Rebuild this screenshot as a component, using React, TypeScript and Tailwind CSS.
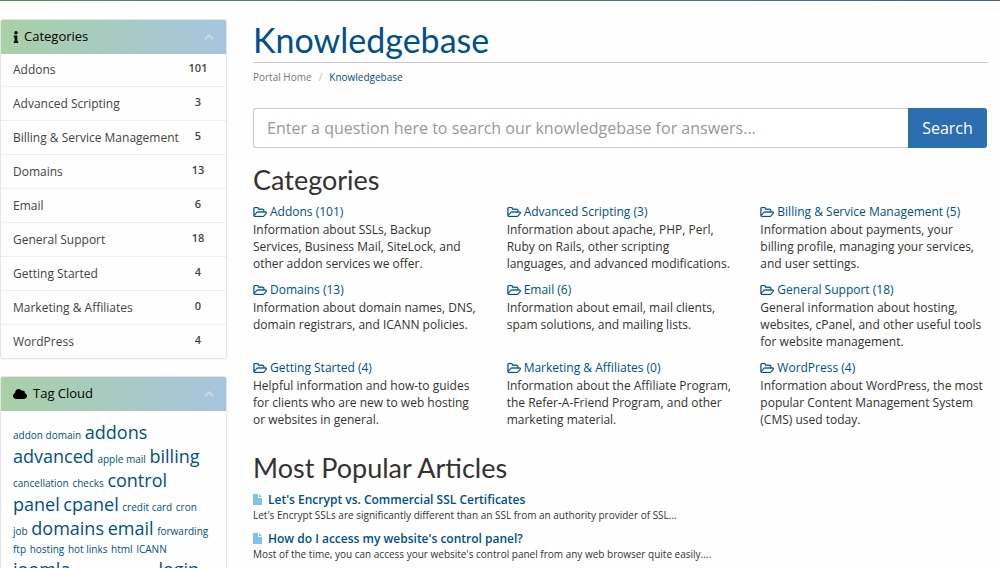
import React, { useState } from 'react';
import { FaChevronUp, FaCloud, FaInfo } from 'react-icons/fa';

interface Category {
  name: string;
  count: number;
  description: string;
}

interface Tag {
  label: string;
  big?: boolean;
}

interface Article {
  title: string;
  excerpt: string;
}

const categories: Category[] = [
  { name: 'Addons', count: 101, description: 'Information about SSLs, Backup Services, Business Mail, SiteLock, and other addon services we offer.' },
  { name: 'Advanced Scripting', count: 3, description: 'Information about apache, PHP, Perl, Ruby on Rails, other scripting languages,\u00a0and advanced modifications.' },
  { name: 'Billing & Service Management', count: 5, description: 'Information about payments, your billing profile, managing your services, and user settings.' },
  { name: 'Domains', count: 13, description: 'Information about domain names, DNS, domain registrars, and ICANN policies.' },
  { name: 'Email', count: 6, description: 'Information about email, mail clients, spam solutions, and mailing lists.' },
  { name: 'General Support', count: 18, description: 'General information about hosting, websites, cPanel, and other useful tools for website management.' },
  { name: 'Getting Started', count: 4, description: 'Helpful information and how-to guides for clients who are new to web hosting or websites in general.' },
  { name: 'Marketing & Affiliates', count: 0, description: 'Information about the Affiliate Program, the Refer-A-Friend Program, and other marketing material.' },
  { name: 'WordPress', count: 4, description: 'Information about WordPress, the most popular Content Management System (CMS) used today.' },
];

const tags: Tag[] = [
  { label: 'addon domain' },
  { label: 'addons', big: true },
  { label: 'advanced', big: true },
  { label: 'apple mail' },
  { label: 'billing', big: true },
  { label: 'cancellation' },
  { label: 'checks' },
  { label: 'control panel', big: true },
  { label: 'cpanel', big: true },
  { label: 'credit card' },
  { label: 'cron job' },
  { label: 'domains', big: true },
  { label: 'email', big: true },
  { label: 'forwarding' },
  { label: 'ftp' },
  { label: 'hosting' },
  { label: 'hot links' },
  { label: 'html' },
  { label: 'ICANN' },
  { label: 'joomla', big: true },
  { label: 'lets encrypt' },
  { label: 'login' },
  { label: 'login', big: true },
];

const articles: Article[] = [
  {
    title: "Let's Encrypt vs. Commercial SSL Certificates",
    excerpt: "Let's Encrypt SSLs are significantly different than an SSL from an authority provider of SSL...",
  },
  {
    title: "How do I access my website's control panel?",
    excerpt: "Most of the time, you can access your website's control panel from any web browser quite easily....",
  },
];

function FolderIcon() {
  return (
    <svg
      viewBox="0 128 1984 1408"
      className="mr-[3px] inline-block h-[10px] w-[14px] align-[-1px]"
      fill="currentColor"
      stroke="currentColor"
      strokeWidth="50"
      aria-hidden="true"
    >
      <path d="M1845 931q0-35-53-35h-1088q-40 0-85.5 21.5t-71.5 52.5l-294 363q-18 24-18 40 0 35 53 35h1088q40 0 86-22t71-53l294-363q18-22 18-39zm-1141-163h768v-160q0-40-28-68t-68-28h-576q-40 0-68-28t-28-68v-64q0-40-28-68t-68-28h-320q-40 0-68 28t-28 68v853l256-315q44-53 116-87.5t140-34.5zm1269 163q0 62-46 120l-295 363q-43 53-116 87.5t-140 34.5h-1088q-92 0-158-66t-66-158v-960q0-92 66-158t158-66h320q92 0 158 66t66 158v32h544q92 0 158 66t66 158v160h192q54 0 99 24.5t67 70.5q15 32 15 68z" />
    </svg>
  );
}

function FileIcon() {
  return (
    <svg viewBox="0 0 9 11" className="mr-[6px] inline-block h-[11px] w-[9px] align-[-1px] text-[#7cc4ea]" fill="currentColor" aria-hidden="true">
      <path d="M0 0h5v4h4v7H0z" />
      <path d="M6 0l3 3H6z" />
    </svg>
  );
}

interface PanelProps {
  title: string;
  icon: React.ReactNode;
  children: React.ReactNode;
}

function Panel({ title, icon, children }: PanelProps) {
  const [open, setOpen] = useState(true);

  return (
    <section className="overflow-hidden rounded-[3px] border border-[#e4e4e4] shadow-xs">
      <h3 className="-m-px">
        <button
          type="button"
          onClick={() => setOpen(!open)}
          aria-expanded={open}
          className="flex h-[35px] w-full items-center bg-linear-to-r from-[#a9d0a6] to-[#a7c4de] px-[13px] text-left text-[13px] text-black"
        >
          {icon}
          <span className="flex-1">{title}</span>
          <FaChevronUp
            stroke="currentColor"
            strokeWidth="40"
            className={open ? 'h-[10px] w-[10px] text-[#d3d8dc]' : 'h-[10px] w-[10px] rotate-180 text-[#d3d8dc]'}
          />
        </button>
      </h3>
      {open && children}
    </section>
  );
}

function App() {
  const [query, setQuery] = useState('');

  return (
    <div className="h-screen overflow-hidden bg-[#fefefe] font-['Open_Sans',sans-serif] text-[#333]">
      <div className="h-px bg-linear-to-r from-[#4f9058] to-[#3a6a94]" />
      <div className="flex gap-[26px] pt-[18px] pr-[12px]">
        <aside className="flex w-[227px] shrink-0 flex-col gap-[17px]">
          <Panel title="Categories" icon={<FaInfo className="mr-[5px] h-3 w-[6px]" />}>
            <ul>
              {categories.map((category) => (
                <li key={category.name} className="border-t border-[#eee] first:border-t-0">
                  <a href="#" className="flex h-[33px] justify-between px-3 text-xs leading-[33px] text-[#444]">
                    <span>{category.name}</span>
                    <span className="w-8 text-center text-[11px] leading-[29px] font-semibold">{category.count}</span>
                  </a>
                </li>
              ))}
            </ul>
          </Panel>

          <Panel title="Tag Cloud" icon={<FaCloud className="mr-[6px] h-[14px] w-[14px]" />}>
            <div className="pt-[10px] pr-4 pl-3 text-sm leading-4 text-[#00508a]">
              {tags.map((tag, index) => (
                <React.Fragment key={index}>
                  <a href="#" className={tag.big ? 'text-lg leading-6' : 'text-[10px] leading-4'}>
                    {tag.label}
                  </a>{' '}
                </React.Fragment>
              ))}
            </div>
          </Panel>
        </aside>

        <main className="min-w-0 flex-1">
          <h1 className="h-11 border-b border-[#ccc] font-['Lato',sans-serif] text-[34px] leading-[42px] text-[#00508a]">
            Knowledgebase
          </h1>
          <nav aria-label="Breadcrumb" className="mt-[6px] text-[10px] leading-4">
            <a href="#" className="text-[#777]">Portal Home</a>
            <span className="mx-[7px] text-[#bbb]">/</span>
            <a href="#" className="text-[#00508a]">Knowledgebase</a>
          </nav>

          <form className="mt-[23px] flex h-10 pr-px" onSubmit={(e) => e.preventDefault()}>
            <input
              type="text"
              aria-label="Search the knowledgebase"
              value={query}
              onChange={(e) => setQuery(e.target.value)}
              placeholder="Enter a question here to search our knowledgebase for answers..."
              className="min-w-0 flex-1 rounded-l-[3px] border border-r-0 border-[#ccc] bg-white px-[13px] text-base placeholder:text-[#999] focus:outline-none"
            />
            <button type="submit" className="w-[79px] rounded-r-[3px] bg-[#2d6eb0] text-base text-white">
              Search
            </button>
          </form>

          <h2 className="mt-4 font-['Lato',sans-serif] text-[27px] leading-8">Categories</h2>
          <div className="mt-[6px] grid auto-rows-[78px] grid-cols-3 gap-x-[26px]">
            {categories.map((category) => (
              <div key={category.name} className="text-xs leading-[17px]">
                <a href="#" className="block leading-[19px] whitespace-nowrap text-[#00508a]">
                  <FolderIcon />
                  {category.name} ({category.count})
                </a>
                <p>{category.description}</p>
              </div>
            ))}
          </div>

          <h2 className="mt-4 font-['Lato',sans-serif] text-[27px] leading-8">Most Popular Articles</h2>
          <div className="mt-[6px] space-y-2">
            {articles.map((article) => (
              <div key={article.title}>
                <a href="#" className="block text-xs leading-[19px] font-semibold text-[#00508a]">
                  <FileIcon />
                  {article.title}
                </a>
                <p className="text-[10px] leading-3">{article.excerpt}</p>
              </div>
            ))}
          </div>
        </main>
      </div>
    </div>
  );
}

export default App;
